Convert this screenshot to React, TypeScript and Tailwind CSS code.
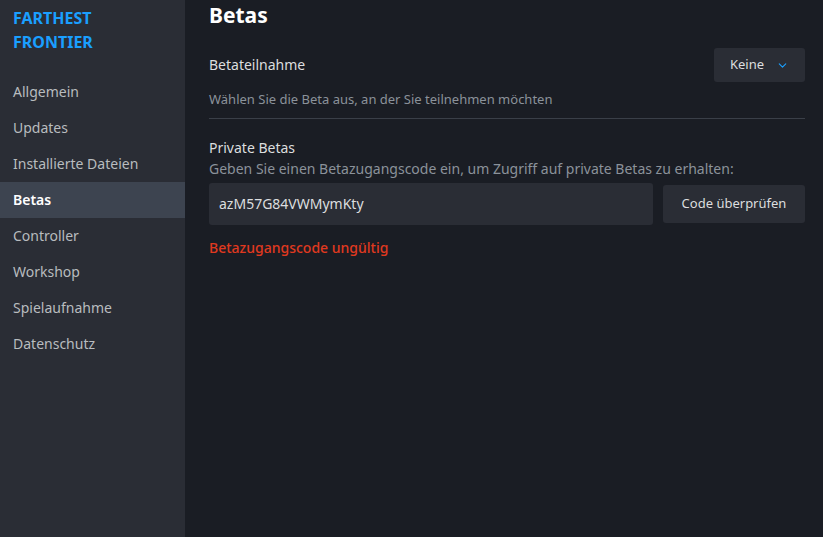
import { ChevronDown } from 'lucide-react'

const nav = ['Allgemein', 'Updates', 'Installierte Dateien', 'Betas', 'Controller', 'Workshop', 'Spielaufnahme', 'Datenschutz']

export default function App() {
  return (
    <div className="flex h-[537px] w-[823px] overflow-hidden bg-[#1a1d24] text-[#dcdedf]" style={{ fontFamily: '"Noto Sans", "Open Sans", sans-serif' }}>
      <aside className="flex w-[185px] shrink-0 flex-col bg-[#2a2d35]">
        <div className="px-[13px] pt-[6px] text-[16px] font-bold leading-[24px] text-[#1a9fff]">
          FARTHEST
          <br />
          FRONTIER
        </div>
        <nav className="mt-[20px] flex flex-col">
          {nav.map((item) => (
            <div
              key={item}
              className={
                item === 'Betas'
                  ? 'flex h-[36px] items-center bg-[#3d4450] px-[13px] pb-px text-[14px] font-semibold text-white'
                  : 'flex h-[36px] items-center px-[13px] pb-px text-[14px] text-[#b8bcbf]'
              }
            >
              {item}
            </div>
          ))}
        </nav>
      </aside>

      <main className="flex flex-1 flex-col pl-[24px] pr-[18px]">
        <h1 className="mt-[1px] text-[21px] font-bold leading-[28px] text-white">Betas</h1>

        <div className="mt-[19px] flex items-center justify-between">
          <span className="pb-[2px] text-[14px] text-[#dcdedf]">Betateilnahme</span>
          <button className="flex h-[34px] w-[91px] items-center justify-center gap-[12px] rounded-[3px] bg-[#2a2d35] text-[13px] text-[#dcdedf]">
            Keine
            <ChevronDown size={13} className="text-[#1a9fff]" strokeWidth={2} />
          </button>
        </div>
        <p className="mt-[8px] text-[13px] text-[#8b929a]">Wählen Sie die Beta aus, an der Sie teilnehmen möchten</p>
        <div className="mt-[8px] h-px bg-[#3a3f48]" />

        <div className="mt-[19px] text-[14px] leading-[20px] text-[#dcdedf]">Private Betas</div>
        <p className="mt-px text-[14px] leading-[20px] text-[#8b929a]">Geben Sie einen Betazugangscode ein, um Zugriff auf private Betas zu erhalten:</p>
        <div className="mt-[4px] flex items-center gap-[10px]">
          <div className="flex h-[42px] flex-1 items-center rounded-[3px] bg-[#2a2d35] px-[10px] text-[14px] text-[#dcdedf]">azM57G84VWMymKty</div>
          <button className="h-[38px] w-[142px] rounded-[3px] bg-[#2a2d35] text-[13px] text-[#dcdedf]">Code überprüfen</button>
        </div>
        <div className="mt-[12px] text-[14px] font-medium text-[#e0391f]">Betazugangscode ungültig</div>
      </main>
    </div>
  )
}
